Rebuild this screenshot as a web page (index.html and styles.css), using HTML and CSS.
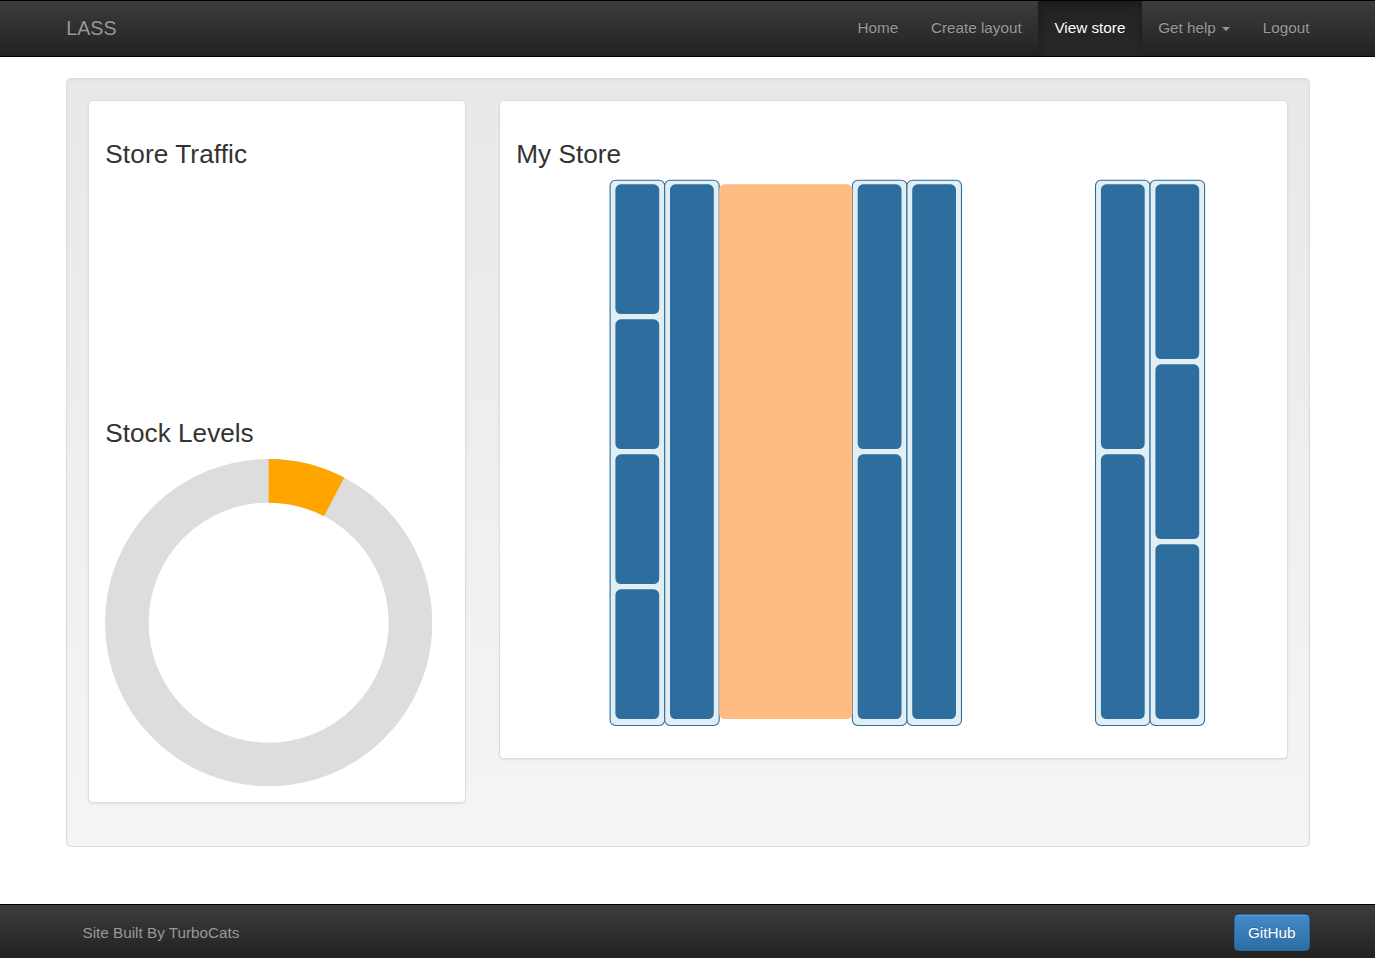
FILE: index.html
```
<!DOCTYPE html>
<html lang="en">
<head>
<meta charset="utf-8">
<title>LASS</title>
<link rel="stylesheet" href="styles.css">
</head>
<body>
<header class="navbar">
  <div class="container bar">
    <a class="brand">LASS</a>
    <nav class="nav">
      <a class="nav-link">Home</a>
      <a class="nav-link">Create layout</a>
      <a class="nav-link active">View store</a>
      <a class="nav-link">Get help <span class="caret"></span></a>
      <a class="nav-link">Logout</a>
    </nav>
  </div>
</header>
<main class="container well">
  <section class="panel side">
    <h3 class="title wide">Store Traffic</h3>
    <div class="traffic"></div>
    <h3 class="title">Stock Levels</h3>
    <svg class="donut" viewBox="-150 -150 300 300">
      <circle r="130" fill="none" stroke="#ddd" stroke-width="40"/>
      <path d="M0-150A150 150 0 0 1 69.3-133.05L50.8-97.57A110 110 0 0 0 0-110Z" fill="orange"/>
    </svg>
  </section>
  <section class="panel store">
    <h3 class="title">My Store</h3>
    <svg class="plan" viewBox="516 179 756 562">
      <g class="unit">
        <rect x="610.1" y="180.3" width="54.55" height="545.2" rx="5.45"/>
        <rect x="664.65" y="180.3" width="54.55" height="545.2" rx="5.45"/>
        <rect x="852.4" y="180.3" width="54.55" height="545.2" rx="5.45"/>
        <rect x="906.95" y="180.3" width="54.55" height="545.2" rx="5.45"/>
        <rect x="1095.5" y="180.3" width="54.55" height="545.2" rx="5.45"/>
        <rect x="1150.05" y="180.3" width="54.55" height="545.2" rx="5.45"/>
      </g>
      <rect class="aisle" x="719.2" y="184.3" width="133.2" height="534.7" rx="5.45"/>
      <g class="shelf">
        <rect x="615.4" y="184.3" width="43.8" height="129.7" rx="5.45"/>
        <rect x="615.4" y="319.3" width="43.8" height="129.7" rx="5.45"/>
        <rect x="615.4" y="454.3" width="43.8" height="129.7" rx="5.45"/>
        <rect x="615.4" y="589.3" width="43.8" height="129.7" rx="5.45"/>
        <rect x="670" y="184.3" width="43.8" height="534.7" rx="5.45"/>
        <rect x="857.7" y="184.3" width="43.8" height="264.7" rx="5.45"/>
        <rect x="857.7" y="454.3" width="43.8" height="264.7" rx="5.45"/>
        <rect x="912.2" y="184.3" width="43.8" height="534.7" rx="5.45"/>
        <rect x="1100.9" y="184.3" width="43.8" height="264.7" rx="5.45"/>
        <rect x="1100.9" y="454.3" width="43.8" height="264.7" rx="5.45"/>
        <rect x="1155.4" y="184.3" width="43.8" height="174.7" rx="5.45"/>
        <rect x="1155.4" y="364.3" width="43.8" height="174.7" rx="5.45"/>
        <rect x="1155.4" y="544.3" width="43.8" height="174.7" rx="5.45"/>
      </g>
    </svg>
  </section>
</main>
<footer class="footer">
  <div class="container bar">
    <p class="credit">Site Built By TurboCats</p>
    <a class="btn">GitHub</a>
  </div>
</footer>
</body>
</html>
```
FILE: styles.css
```
* { box-sizing: border-box; }
body {
  margin: 0;
  height: 958px;
  display: flex;
  flex-direction: column;
  overflow: hidden;
  background: #fff;
  color: #333;
  font: 15.27px/21.8px "Liberation Sans", Arial, sans-serif;
}
.container { width: 1244px; margin: 0 auto; }
.bar { display: flex; justify-content: space-between; }
.navbar {
  flex: none;
  height: 57px;
  border: solid #000;
  border-width: 1px 0;
  background: linear-gradient(#3c3c3c, #222);
  color: #999;
}
.brand {
  padding-left: 0.8px;
  font-size: 19.64px;
  line-height: 54px;
  text-shadow: 0 -1px 0 rgba(0,0,0,.25);
}
.nav { display: flex; height: 55px; margin-right: -16.4px; }
.nav-link {
  padding: 0 16.36px;
  line-height: 54px;
  white-space: nowrap;
  text-shadow: 0 -1px 0 rgba(0,0,0,.25);
}
.active {
  color: #fff;
  background: linear-gradient(#222, #282828);
  box-shadow: inset 0 3px 9px rgba(0,0,0,.25);
}
.caret {
  display: inline-block;
  margin-left: 2px;
  vertical-align: middle;
  border-top: 4px solid #999;
  border-right: 4px solid transparent;
  border-left: 4px solid transparent;
}
.well {
  flex: none;
  display: flex;
  align-items: flex-start;
  gap: 33px;
  height: 769px;
  margin-top: 21px;
  padding: 21px;
  border: 1px solid #dcdcdc;
  border-radius: 4.4px;
  background: linear-gradient(#e8e8e8, #f5f5f5);
  box-shadow: inset 0 1px 3px rgba(0,0,0,.05), 0 1px 0 rgba(255,255,255,.1);
}
.panel {
  padding: 16px;
  border: 1px solid #ddd;
  border-radius: 4.4px;
  background: #fff;
  box-shadow: 0 1px 2px rgba(0,0,0,.075);
}
.side { width: 378px; height: 703px; }
.store { width: 789px; height: 659px; }
.title {
  margin: 23px 0 11px;
  padding-left: 0.8px;
  font-size: 26.18px;
  line-height: 29px;
  font-weight: 500;
}
.wide { letter-spacing: 0.1px; }
.store .title { margin-bottom: 10px; }
.traffic { height: 216px; }
.donut { display: block; width: 327.3px; height: 327.3px; margin-left: 0.4px; }
.plan { display: block; width: 756px; height: 562px; }
.unit { fill: #e1eef4; stroke: #2d6e9e; stroke-width: 1.09; }
.aisle { fill: #ffbb82; }
.shelf { fill: #2d6e9e; }
.footer {
  flex: none;
  height: 54px;
  margin-top: auto;
  border-top: 1px solid #000;
  background: linear-gradient(#3c3c3c, #222);
  color: #999;
}
.credit { margin: 17px 0 0 17px; }
.btn {
  height: 37px;
  margin-top: 9px;
  padding: 7px 13.1px;
  border: 1px solid #2b669a;
  border-radius: 4.4px;
  background: linear-gradient(#428bca, #2d6ca2);
  color: #fff;
  text-shadow: 0 -1px 0 rgba(0,0,0,.2);
  box-shadow: inset 0 1px 0 rgba(255,255,255,.15), 0 1px 1px rgba(0,0,0,.075);
}
```
